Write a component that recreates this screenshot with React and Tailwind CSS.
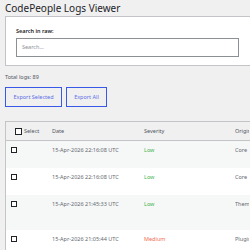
import React from 'react';

const rows = [
  { date: '15-Apr-2026 22:16:08 UTC', severity: 'Low', origin: 'Core', h: 'h-[27px]', bg: 'bg-[#f6f7f7]' },
  { date: '15-Apr-2026 22:16:08 UTC', severity: 'Low', origin: 'Core', h: 'h-[27px]', bg: 'bg-white' },
  { date: '15-Apr-2026 21:45:33 UTC', severity: 'Low', origin: 'Theme', h: 'h-[35px]', bg: 'bg-[#f6f7f7]' },
  { date: '15-Apr-2026 21:05:44 UTC', severity: 'Medium', origin: 'Plugin', h: 'h-[27px]', bg: 'bg-white' },
];

function Box({ size }) {
  return <span className={`block ${size} border border-[#1d2327] bg-white`} />;
}

export default function App() {
  return (
    <div className="w-[250px] h-[250px] overflow-hidden bg-[#f0f0f1] pl-[5px] font-['Noto_Sans',sans-serif] text-[#3c434a]">
      <h1 className="pt-[2px] text-[10px] leading-[12px] text-[#1d2327] whitespace-nowrap">CodePeople Logs Viewer</h1>

      {/* Filtro de búsqueda */}
      <div className="mt-[2px] w-[260px] h-[50px] border border-[#c3c4c7] bg-white pl-[10px] pt-[11px]">
        <label className="block text-[5.5px] leading-[7px] font-semibold text-[#1d2327]">Search in raw:</label>
        <div className="mt-[3px] w-[223px] h-[19px] border border-[#8c8f94] flex items-center pl-[5px] text-[5.5px] text-[#8c8f94]">
          Search...
        </div>
      </div>

      <p className="mt-[8px] text-[5.5px] leading-[7px] text-[#50575e]">Total logs: 89</p>

      <div className="mt-[6px] flex gap-[4px]">
        <button type="button" className="w-[57px] h-[20px] border border-[#3858e9] text-[5.5px] text-[#5b6ee8] flex items-center justify-center">
          Export Selected
        </button>
        <button type="button" className="w-[41px] h-[20px] border border-[#3858e9] text-[5.5px] text-[#5b6ee8] flex items-center justify-center">
          Export All
        </button>
      </div>

      {/* Tabla de logs */}
      <div className="mt-[14px] w-[300px] border border-[#c3c4c7] bg-white">
        <div className="h-[19px] flex items-center bg-[#f0f0f1] border-b border-[#c3c4c7] text-[5.5px] text-[#50575e]">
          <div className="w-[46px] pl-[9px] flex items-center gap-[2px]">
            <Box size="w-[7px] h-[7px]" />
            <span>Select</span>
          </div>
          <div className="w-[92px]">Date</div>
          <div className="w-[91px]">Severity</div>
          <div className="w-[14px] overflow-hidden whitespace-nowrap">Origin</div>
        </div>
        {rows.map((r, i) => (
          <div key={i} className={`${r.h} ${r.bg} flex items-start pt-[6px] text-[5.5px] leading-[7px] text-[#646970]`}>
            <div className="w-[46px] pl-[5px]">
              <Box size="w-[6px] h-[6px]" />
            </div>
            <div className="w-[92px] whitespace-nowrap">{r.date}</div>
            <div className={`w-[91px] ${r.severity === 'Low' ? 'text-[#3fb34f]' : 'text-[#f26c4f]'}`}>{r.severity}</div>
            <div className="w-[14px] overflow-hidden whitespace-nowrap">{r.origin}</div>
          </div>
        ))}
      </div>
    </div>
  );
}
